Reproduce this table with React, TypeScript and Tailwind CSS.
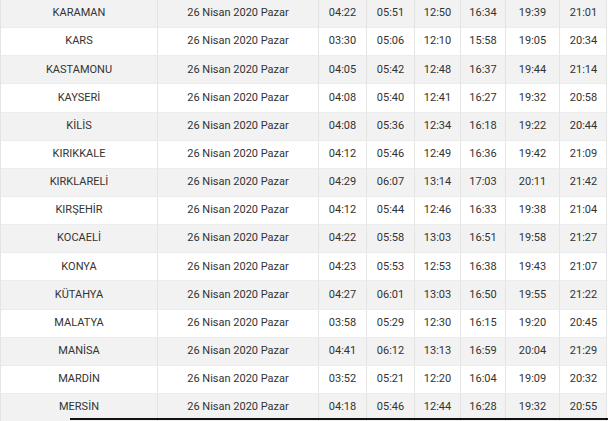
const rows: string[][] = [
  ['KARAMAN', '04:22', '05:51', '12:50', '16:34', '19:39', '21:01'],
  ['KARS', '03:30', '05:06', '12:10', '15:58', '19:05', '20:34'],
  ['KASTAMONU', '04:05', '05:42', '12:48', '16:37', '19:44', '21:14'],
  ['KAYSERİ', '04:08', '05:40', '12:41', '16:27', '19:32', '20:58'],
  ['KİLİS', '04:08', '05:36', '12:34', '16:18', '19:22', '20:44'],
  ['KIRIKKALE', '04:12', '05:46', '12:49', '16:36', '19:42', '21:09'],
  ['KIRKLARELİ', '04:29', '06:07', '13:14', '17:03', '20:11', '21:42'],
  ['KIRŞEHİR', '04:12', '05:44', '12:46', '16:33', '19:38', '21:04'],
  ['KOCAELİ', '04:22', '05:58', '13:03', '16:51', '19:58', '21:27'],
  ['KONYA', '04:23', '05:53', '12:53', '16:38', '19:43', '21:07'],
  ['KÜTAHYA', '04:27', '06:01', '13:03', '16:50', '19:55', '21:22'],
  ['MALATYA', '03:58', '05:29', '12:30', '16:15', '19:20', '20:45'],
  ['MANİSA', '04:41', '06:12', '13:13', '16:59', '20:04', '21:29'],
  ['MARDİN', '03:52', '05:21', '12:20', '16:04', '19:09', '20:32'],
  ['MERSİN', '04:18', '05:46', '12:44', '16:28', '19:32', '20:55'],
];

export default function App() {
  return (
    <div className="relative w-[608px] h-[421px] overflow-hidden bg-white font-['Roboto',sans-serif] text-[11px] text-[#333]">
      <div className="border-l border-[#e4e4e4] w-[607px] border-r">
        {rows.map(([city, ...times], i) => (
          <div
            key={city}
            className={`grid grid-cols-[157px_161px_48px_48px_46px_45px_54px_47px] h-[28.15px] items-stretch border-b border-[#ececec] ${
              i % 2 === 0 ? 'bg-[#f2f2f2]' : 'bg-white'
            }`}
          >
            <div className="flex items-center justify-center border-r border-[#e4e4e4]">{city}</div>
            <div className="flex items-center justify-center border-r border-[#e4e4e4]">26 Nisan 2020 Pazar</div>
            {times.map((t, j) => (
              <div
                key={j}
                className={`flex items-center justify-center ${j < times.length - 1 ? 'border-r border-[#e4e4e4]' : ''}`}
              >
                {t}
              </div>
            ))}
          </div>
        ))}
      </div>
      {/* dark edge at the bottom of the capture */}
      <div className="absolute left-[70px] right-0 top-[418px] h-[2px] bg-[#111]" />
    </div>
  );
}
